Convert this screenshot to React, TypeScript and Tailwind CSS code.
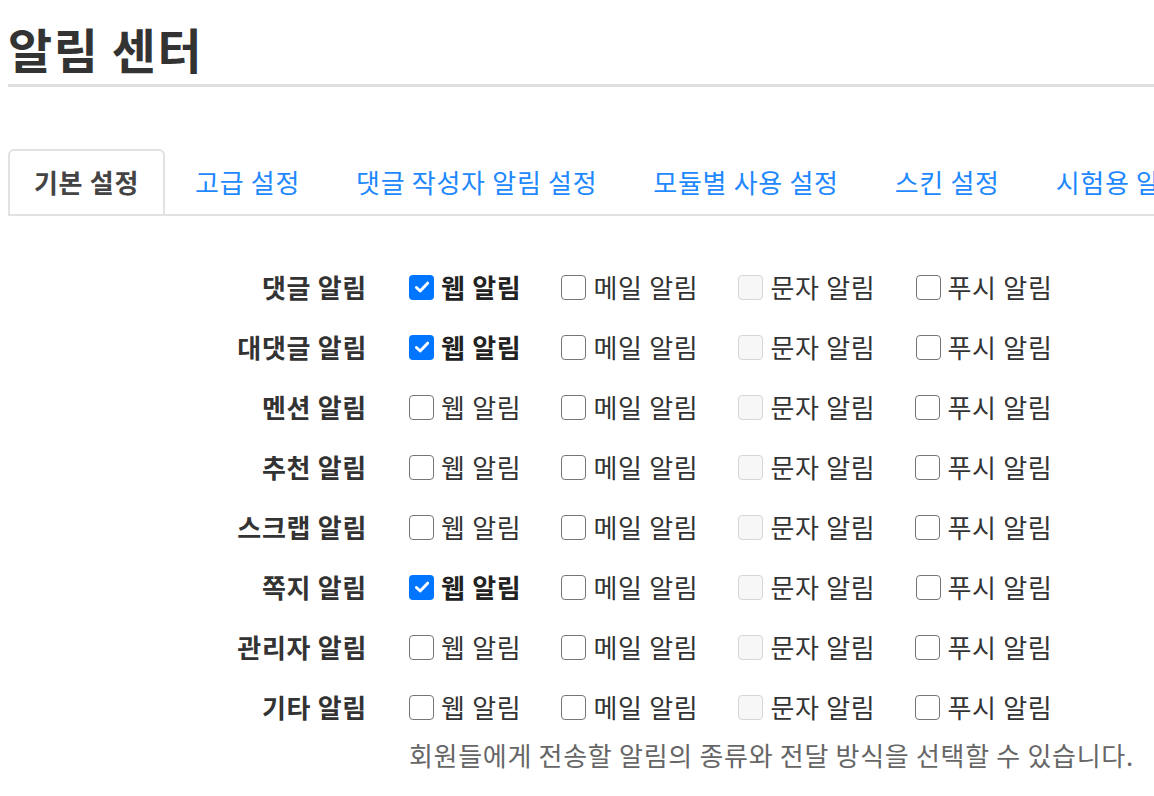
import React from 'react';

type Mode = 'on' | 'off' | 'disabled';

const channels = ['웹 알림', '메일 알림', '문자 알림', '푸시 알림'];

const rows: { label: string; web: boolean }[] = [
  { label: '댓글 알림', web: true },
  { label: '대댓글 알림', web: true },
  { label: '멘션 알림', web: false },
  { label: '추천 알림', web: false },
  { label: '스크랩 알림', web: false },
  { label: '쪽지 알림', web: true },
  { label: '관리자 알림', web: false },
  { label: '기타 알림', web: false },
];

const tabs = ['기본 설정', '고급 설정', '댓글 작성자 알림 설정', '모듈별 사용 설정', '스킨 설정', '시험용 알림 설정'];

const Box: React.FC<{ mode: Mode }> = ({ mode }) => {
  if (mode === 'on') {
    return (
      <span className="flex h-[25px] w-[25px] shrink-0 items-center justify-center rounded-[4px] bg-[#0075ff]">
        <svg viewBox="0 0 16 16" className="h-[18px] w-[18px]">
          <path d="M3 8.4 L6.4 11.6 L13 4.6" fill="none" stroke="white" strokeWidth="2.6" strokeLinecap="round" strokeLinejoin="round" />
        </svg>
      </span>
    );
  }
  if (mode === 'disabled') {
    return <span className="h-[25px] w-[25px] shrink-0 rounded-[4px] border-[1.5px] border-[#d6d6d6] bg-[#f7f7f7]" />;
  }
  return <span className="h-[25px] w-[25px] shrink-0 rounded-[4px] border-[1.5px] border-[#767676] bg-white" />;
};

export default function App() {
  return (
    <div
      className="min-h-screen overflow-hidden bg-white pl-2 text-[#333]"
      style={{ fontFamily: '"Noto Sans CJK KR", "Noto Sans", sans-serif' }}
    >
      {/* Page title */}
      <h1 className="border-b-[3px] border-[#dfdfdf] pt-[20px] pb-[8px] text-[48px] font-bold leading-[56px] tracking-[1.5px] text-[#333]">
        알림 센터
      </h1>

      {/* Tabs (the last one runs past the window edge, as in the page) */}
      <ul className="mt-[62px] flex overflow-hidden whitespace-nowrap border-b-2 border-[#e2e2e2]">
        {tabs.map((t, i) => (
          <li
            key={t}
            className={`-mb-[2px] mr-[4px] shrink-0 rounded-t-[6px] border-2 px-[24px] pt-[13px] pb-[14px] text-[26px] leading-[36px] tracking-[0.7px] ${
              i === 0
                ? 'border-[#e2e2e2] border-b-white bg-white font-bold text-[#444]'
                : 'border-transparent text-[#1e88ff]'
            }`}
          >
            {t}
          </li>
        ))}
      </ul>

      {/* Notification matrix */}
      <div className="mt-[41px]">
        {rows.map((r) => (
          <div key={r.label} className="flex h-[60px] items-center">
            <div className="w-[359px] text-right text-[26px] font-bold leading-[36px] tracking-[0.7px] text-[#333]">{r.label}</div>
            <div className="ml-[42px] flex items-center">
              {channels.map((c, ci) => {
                const mode: Mode = ci === 0 ? (r.web ? 'on' : 'off') : ci === 2 ? 'disabled' : 'off';
                return (
                  <label key={c} className="mr-[40px] flex items-center gap-[7px]">
                    <Box mode={mode} />
                    <span
                      className={`text-[26px] leading-[36px] tracking-[0.7px] ${mode === 'on' ? 'font-bold text-[#222]' : 'text-[#333]'}`}
                    >
                      {c}
                    </span>
                  </label>
                );
              })}
            </div>
          </div>
        ))}
        <p className="ml-[401px] text-[26px] leading-[36px] tracking-[0.7px] text-[#666]">
          회원들에게 전송할 알림의 종류와 전달 방식을 선택할 수 있습니다.
        </p>
      </div>
    </div>
  );
}
